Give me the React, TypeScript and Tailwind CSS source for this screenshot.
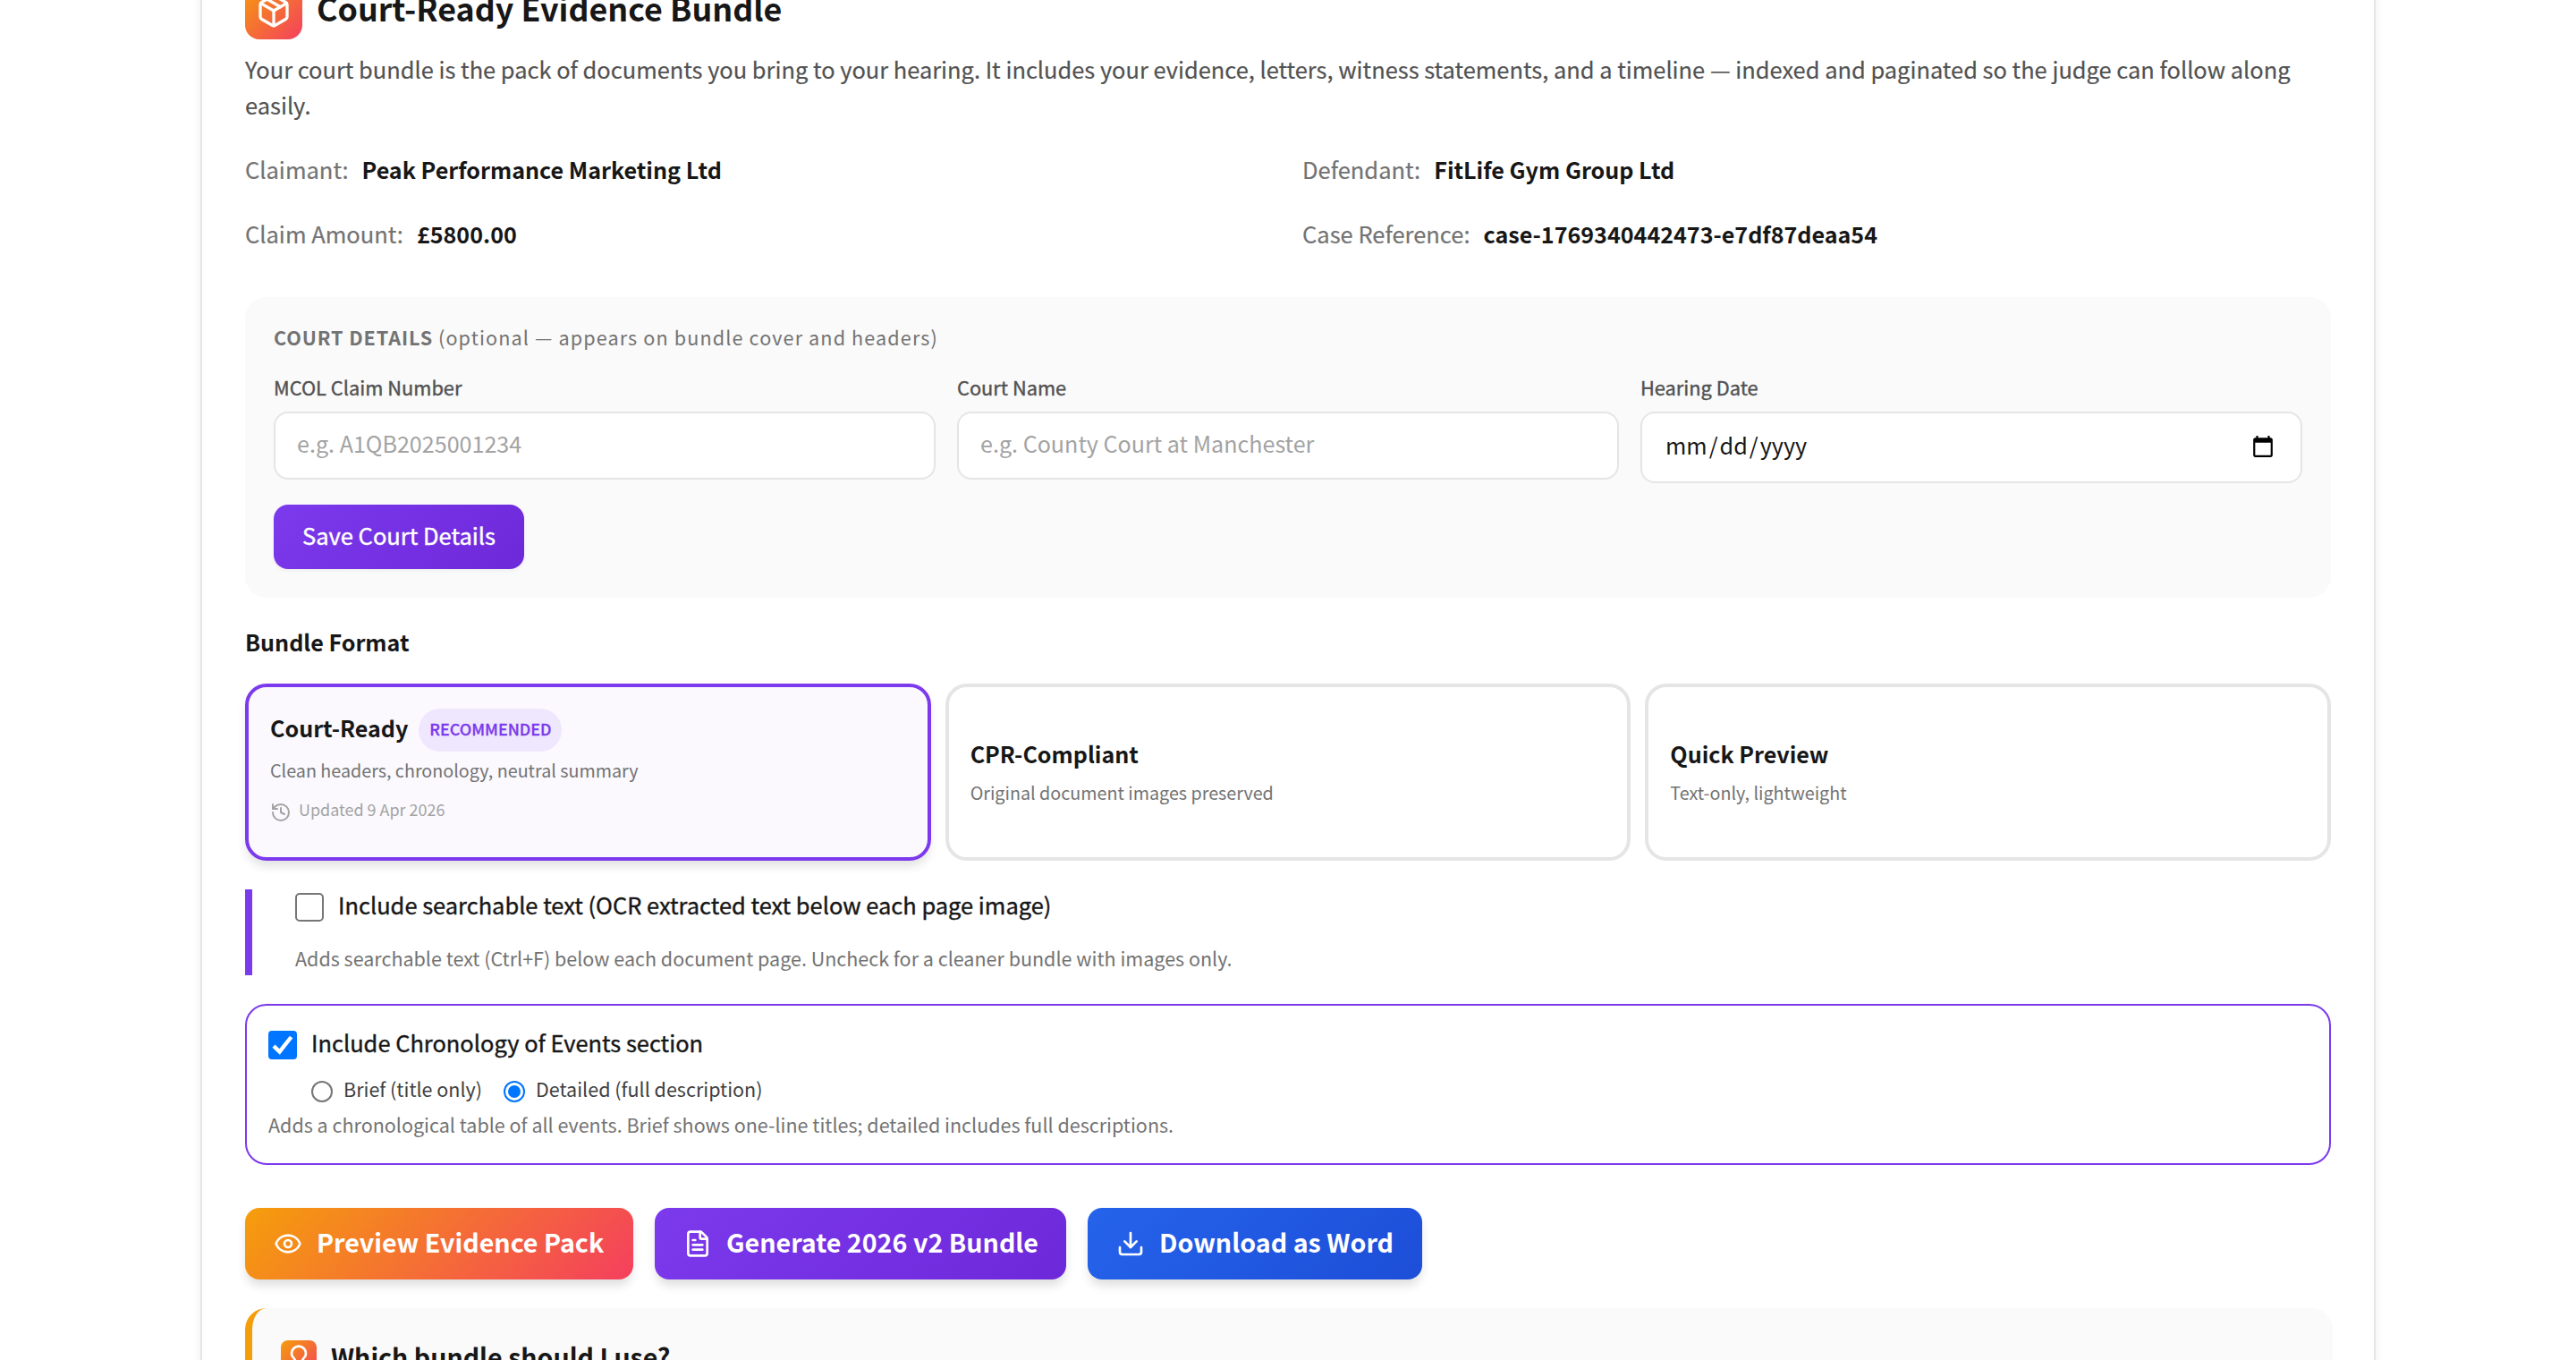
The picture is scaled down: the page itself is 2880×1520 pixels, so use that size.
import type { ReactNode } from "react";
import { Download, Eye, FileText, History, Lightbulb, Package } from "lucide-react";

const caseFacts = [
  { label: "Claimant:", value: "Peak Performance Marketing Ltd" },
  { label: "Defendant:", value: "FitLife Gym Group Ltd" },
  { label: "Claim Amount:", value: "£5800.00" },
  { label: "Case Reference:", value: "case-1769340442473-e7df87deaa54" },
];

function Field({ label, children }: { label: string; children: ReactNode }) {
  return (
    <div className="flex flex-col">
      <span className="mb-[11px] text-[21.8px] leading-8 text-[#525252] [-webkit-text-stroke:0.4px]">{label}</span>
      {children}
    </div>
  );
}

function TextBox({ placeholder }: { placeholder: string }) {
  return (
    <div className="flex h-[76px] items-center rounded-2xl border-2 border-[#e5e5e5] bg-white px-6 pb-1 text-[25.1px] text-[#a3a3a3]">
      {placeholder}
    </div>
  );
}

function DateBox() {
  return (
    <div className="flex h-20 items-center justify-between rounded-2xl border-2 border-[#e5e5e5] bg-white pr-[29px] pl-[26px]">
      <span className="pb-[5px] text-[25.2px] text-[#171717]">
        mm<span className="px-[2px]">/</span>dd<span className="px-[2px]">/</span>yyyy
      </span>
      <svg className="mb-[2px] size-[26px]" viewBox="0 0 24 24" fill="#000">
        <path d="M20 3h-1V1h-2v2H7V1H5v2H4c-1.1 0-2 .9-2 2v16c0 1.1.9 2 2 2h16c1.1 0 2-.9 2-2V5c0-1.1-.9-2-2-2zm0 18H4V8h16v13z" />
      </svg>
    </div>
  );
}

function FormatCard({ title, description }: { title: string; description: string }) {
  return (
    <div className="flex flex-col justify-center rounded-3xl border-4 border-[#e5e5e5] bg-white px-6 pb-[5px]">
      <h4 className="text-[25.1px] leading-10 font-bold">{title}</h4>
      <p className="mt-[10px] text-[19.73px] leading-7 text-[#737373]">{description}</p>
    </div>
  );
}

function Radio({ checked, label }: { checked?: boolean; label: string }) {
  return (
    <label className="flex h-6 items-center">
      <span
        className={
          checked
            ? "flex size-6 items-center justify-center rounded-full border-2 border-[#0075ff]"
            : "size-6 rounded-full border-2 border-[#767676]"
        }
      >
        {checked && <span className="size-[14px] rounded-full bg-[#0075ff]" />}
      </span>
      <span className="ml-3 pb-[6px] text-[21.5px] text-[#404040]">{label}</span>
    </label>
  );
}

export default function App() {
  return (
    <div className="h-[1520px] overflow-hidden bg-white font-['Noto_Sans_CJK_SC','Noto_Sans',sans-serif] text-[#171717]">
      <div className="relative mx-auto h-[1640px] w-[2432px] border-x-2 border-[#e5e5e5] px-12 shadow-[0_8px_12px_-2px_rgba(0,0,0,0.1)]">
        {/* shadow cast by the sticky bar scrolled just above the card */}
        <div className="absolute inset-x-0 -top-[44px] h-10 shadow-[0_8px_12px_-2px_rgba(0,0,0,0.1)]" />

        <div className="-mt-5 flex h-16 items-center">
          <span className="flex size-16 items-center justify-center rounded-2xl bg-[linear-gradient(135deg,#f59e0b,#f43f5e)] text-white">
            <Package size={40} />
          </span>
          <h2 className="ml-4 pb-[8px] text-[35.8px] leading-10 font-bold">Court-Ready Evidence Bundle</h2>
        </div>

        <p className="mt-[13px] text-[25.43px] leading-10 text-[#525252] [-webkit-text-stroke:0.2px]">
          Your court bundle is the pack of documents you bring to your hearing. It includes your evidence,
          letters, witness statements, and a timeline — indexed and paginated so the judge can follow along
          easily.
        </p>

        <div className="mt-8 grid grid-cols-2 gap-8 text-[25.12px] leading-10">
          {caseFacts.map((fact) => (
            <div key={fact.label} className="flex">
              <span className="text-[25.5px] text-[#737373] [-webkit-text-stroke:0.2px]">{fact.label}</span>
              <span className="ml-[15px] font-bold">{fact.value}</span>
            </div>
          ))}
        </div>

        <section className="mt-[51px] rounded-3xl bg-[#fafafa] px-8 pt-[29px] pb-8">
          <p className="text-[21.6px] leading-8 tracking-[1.12px] text-[#737373]">
            <span className="tracking-[0.9px] font-bold">COURT DETAILS</span> (optional — appears on bundle cover
            and headers)
          </p>
          <div className="mt-6 grid grid-cols-3 items-start gap-6">
            <Field label="MCOL Claim Number">
              <TextBox placeholder="e.g. A1QB2025001234" />
            </Field>
            <Field label="Court Name">
              <TextBox placeholder="e.g. County Court at Manchester" />
            </Field>
            <Field label="Hearing Date">
              <DateBox />
            </Field>
          </div>
          <button className="mt-6 flex h-[72px] w-[280px] items-center justify-center rounded-2xl bg-[linear-gradient(135deg,#7c3aed,#6d28d9)] pb-1 text-[25.5px] text-white shadow-[0_2px_4px_rgba(0,0,0,0.06)] [-webkit-text-stroke:0.4px]">
            Save Court Details
          </button>
        </section>

        <h3 className="mt-[29px] text-[25.1px] leading-10 font-bold">Bundle Format</h3>

        <div className="mt-[27px] grid h-[198px] grid-cols-3 gap-4">
          <div className="rounded-3xl border-4 border-[#7c3aed] bg-[#fbf9fe] px-6 pt-6 shadow-[0_8px_12px_-2px_rgba(0,0,0,0.12)]">
            <div className="flex h-12 items-center">
              <h4 className="pb-[6px] text-[25.1px] leading-10 font-bold">Court-Ready</h4>
              <span className="ml-3 flex h-12 w-[160px] items-center justify-center rounded-full bg-[#efe7fd] pb-[3px] text-[17.9px] font-medium text-[#7c3aed] [-webkit-text-stroke:0.3px]">
                RECOMMENDED
              </span>
            </div>
            <p className="mt-[7px] text-[19.73px] leading-7 text-[#737373]">
              Clean headers, chronology, neutral summary
            </p>
            <div className="mt-[21px] flex h-6 items-center text-[#a3a3a3]">
              <History size={24} />
              <span className="ml-2 pb-2 text-[17.95px]">Updated 9 Apr 2026</span>
            </div>
          </div>
          <FormatCard title="CPR-Compliant" description="Original document images preserved" />
          <FormatCard title="Quick Preview" description="Text-only, lightweight" />
        </div>

        <div className="mt-8 h-24 border-l-8 border-[#7c3aed] pt-1 pl-12">
          <label className="flex h-8 items-center">
            <span className="size-8 rounded-[5px] border-2 border-[#767676] bg-white" />
            <span className="ml-4 pb-[5px] text-[25.45px] [-webkit-text-stroke:0.4px]">
              Include searchable text (OCR extracted text below each page image)
            </span>
          </label>
          <p className="mt-[24.5px] text-[21.5px] leading-8 text-[#737373]">
            Adds searchable text (Ctrl+F) below each document page. Uncheck for a cleaner bundle with images only.
          </p>
        </div>

        <div className="mt-8 h-[180px] rounded-3xl border-2 border-[#7c3aed] px-6 pt-7">
          <label className="flex h-8 items-center">
            <svg className="size-8 rounded-[4px] bg-[#0075ff]" viewBox="0 0 32 32" fill="none">
              <path d="M6 17.2 12.6 23.4 25.6 7" stroke="#fff" strokeWidth="4.4" />
            </svg>
            <span className="ml-4 pb-[5px] text-[25.45px] [-webkit-text-stroke:0.4px]">
              Include Chronology of Events section
            </span>
          </label>
          <div className="mt-6 ml-12 flex gap-6">
            <Radio label="Brief (title only)" />
            <Radio label="Detailed (full description)" checked />
          </div>
          <p className="mt-[8.5px] text-[21.5px] leading-8 text-[#737373]">
            Adds a chronological table of all events. Brief shows one-line titles; detailed includes full
            descriptions.
          </p>
        </div>

        <div className="mt-12 flex gap-6 text-[28.65px] font-bold text-white">
          <button className="flex h-20 w-[434px] items-center rounded-2xl bg-[linear-gradient(135deg,#f59e0b,#f43f5e)] pl-8 shadow-[0_8px_12px_-2px_rgba(0,0,0,0.14)]">
            <Eye size={32} />
            <span className="ml-4 pb-1">Preview Evidence Pack</span>
          </button>
          <button className="flex h-20 w-[460px] items-center rounded-2xl bg-[linear-gradient(135deg,#7c3aed,#6d28d9)] pl-8 shadow-[0_8px_12px_-2px_rgba(0,0,0,0.14)]">
            <FileText size={32} />
            <span className="ml-4 pb-1">Generate 2026 v2 Bundle</span>
          </button>
          <button className="flex h-20 w-[374px] items-center rounded-2xl bg-[linear-gradient(135deg,#2563eb,#1d4ed8)] pl-8 shadow-[0_8px_12px_-2px_rgba(0,0,0,0.14)]">
            <Download size={32} />
            <span className="ml-4 pb-1">Download as Word</span>
          </button>
        </div>

        <section className="mt-8 -mr-[2px] h-[200px] rounded-3xl border-l-8 border-[#f59e0b] bg-[#fafafa] pt-9 pl-8">
          <div className="flex h-10 items-center">
            <span className="flex size-10 items-center justify-center rounded-lg bg-[linear-gradient(135deg,#f59e0b,#f43f5e)] text-white">
              <Lightbulb size={32} />
            </span>
            <h3 className="ml-4 pb-1 text-[28.55px] font-bold">Which bundle should I use?</h3>
          </div>
        </section>
      </div>
    </div>
  );
}
